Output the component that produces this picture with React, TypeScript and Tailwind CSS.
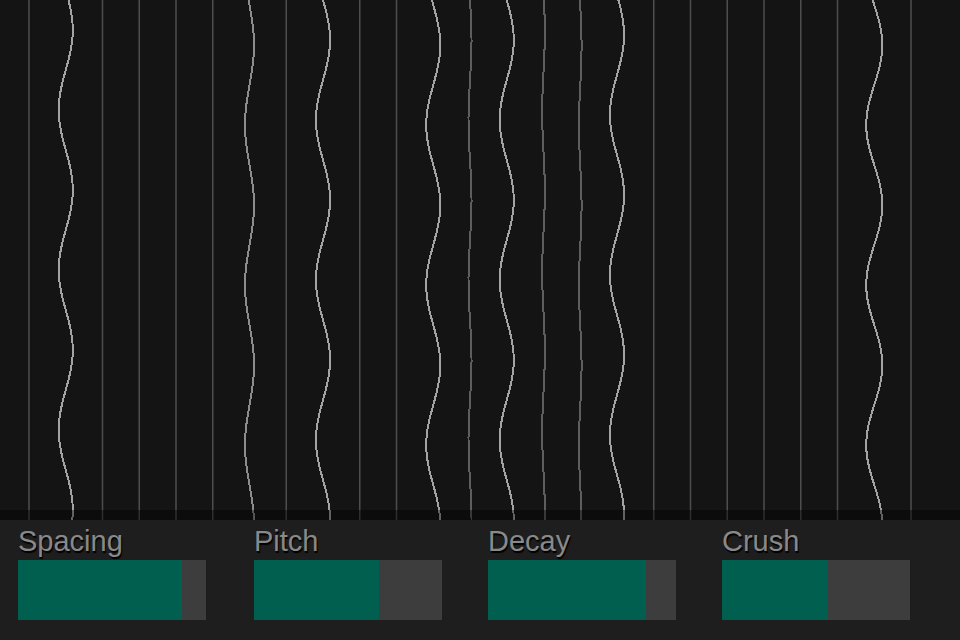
import React from 'react';

// string positions and how hard each one is ringing
const SPACING = 36.75;
const strings = Array.from({ length: 25 }, (_, i) => ({ x: 29 + i * SPACING, amp: 0, phase: 42 }));
const ringing: Record<number, { amp: number; phase: number }> = {
  1: { amp: 7, phase: 30 },
  6: { amp: 4.5, phase: 45 },
  8: { amp: 7, phase: 40 },
  11: { amp: 7, phase: 45 },
  12: { amp: 1.5, phase: 40 },
  13: { amp: 7, phase: 40 },
  14: { amp: 1.3, phase: 32 },
  15: { amp: 1.3, phase: 46 },
  16: { amp: 7, phase: 35 },
  23: { amp: 8, phase: 45 },
};
Object.entries(ringing).forEach(([k, v]) => {
  strings[Number(k)].amp = v.amp;
  strings[Number(k)].phase = v.phase;
});

const wavePoints = (cx: number, amp: number, phase: number) => {
  const pts: string[] = [];
  for (let y = 0; y <= 520; y += 2) {
    const x = cx + amp * Math.cos((2 * Math.PI * (y - phase)) / 160);
    pts.push(`${x.toFixed(2)},${y}`);
  }
  return pts.join(' ');
};

const strokeFor = (amp: number) => {
  if (amp >= 6) return '#a3a3a3';
  if (amp >= 3) return '#8c8c8c';
  if (amp > 0) return '#5e5e5e';
  return '#4e4e4e';
};

const sliders = [
  { label: 'Spacing', value: 0.872 },
  { label: 'Pitch', value: 0.667 },
  { label: 'Decay', value: 0.84 },
  { label: 'Crush', value: 0.564 },
];

const Slider: React.FC<{ label: string; value: number; className?: string }> = ({ label, value, className }) => (
  <div className={`flex flex-col w-[188px] ${className ?? ''}`}>
    <span
      className="text-[29px] leading-[28px] text-[#898989] h-[28px] whitespace-nowrap"
      style={{ fontFamily: '"Liberation Sans", Arial, sans-serif', textShadow: '1px 2px 1px #000' }}
    >
      {label}
    </span>
    <div className="mt-[5px] h-[60px] bg-[#3d3d3d] flex">
      <div className="h-full bg-[#005f4f]" style={{ width: `${value * 100}%` }} />
    </div>
  </div>
);

export default function App() {
  return (
    <div className="w-[960px] h-[640px] flex flex-col bg-[#141414] overflow-hidden">
      <div className="relative h-[520px]">
        <svg width="960" height="520" className="block">
          {strings.map((s, i) =>
            s.amp === 0 ? (
              <line key={i} x1={s.x} y1={0} x2={s.x} y2={520} stroke={strokeFor(0)} strokeWidth={1.5} />
            ) : (
              <polyline
                key={i}
                points={wavePoints(s.x, s.amp, s.phase)}
                fill="none"
                stroke={strokeFor(s.amp)}
                strokeWidth={2}
                shapeRendering="crispEdges"
              />
            )
          )}
        </svg>
        <div className="absolute left-0 right-0 bottom-0 h-[10px] bg-black/40" />
      </div>
      <div className="h-[120px] bg-[#1e1e1e] flex pl-[18px] pt-[7px] gap-[46px]">
        {sliders.map((s, i) => (
          <Slider key={s.label} label={s.label} value={s.value} className={i === 0 ? 'mr-[2px]' : ''} />
        ))}
      </div>
    </div>
  );
}
